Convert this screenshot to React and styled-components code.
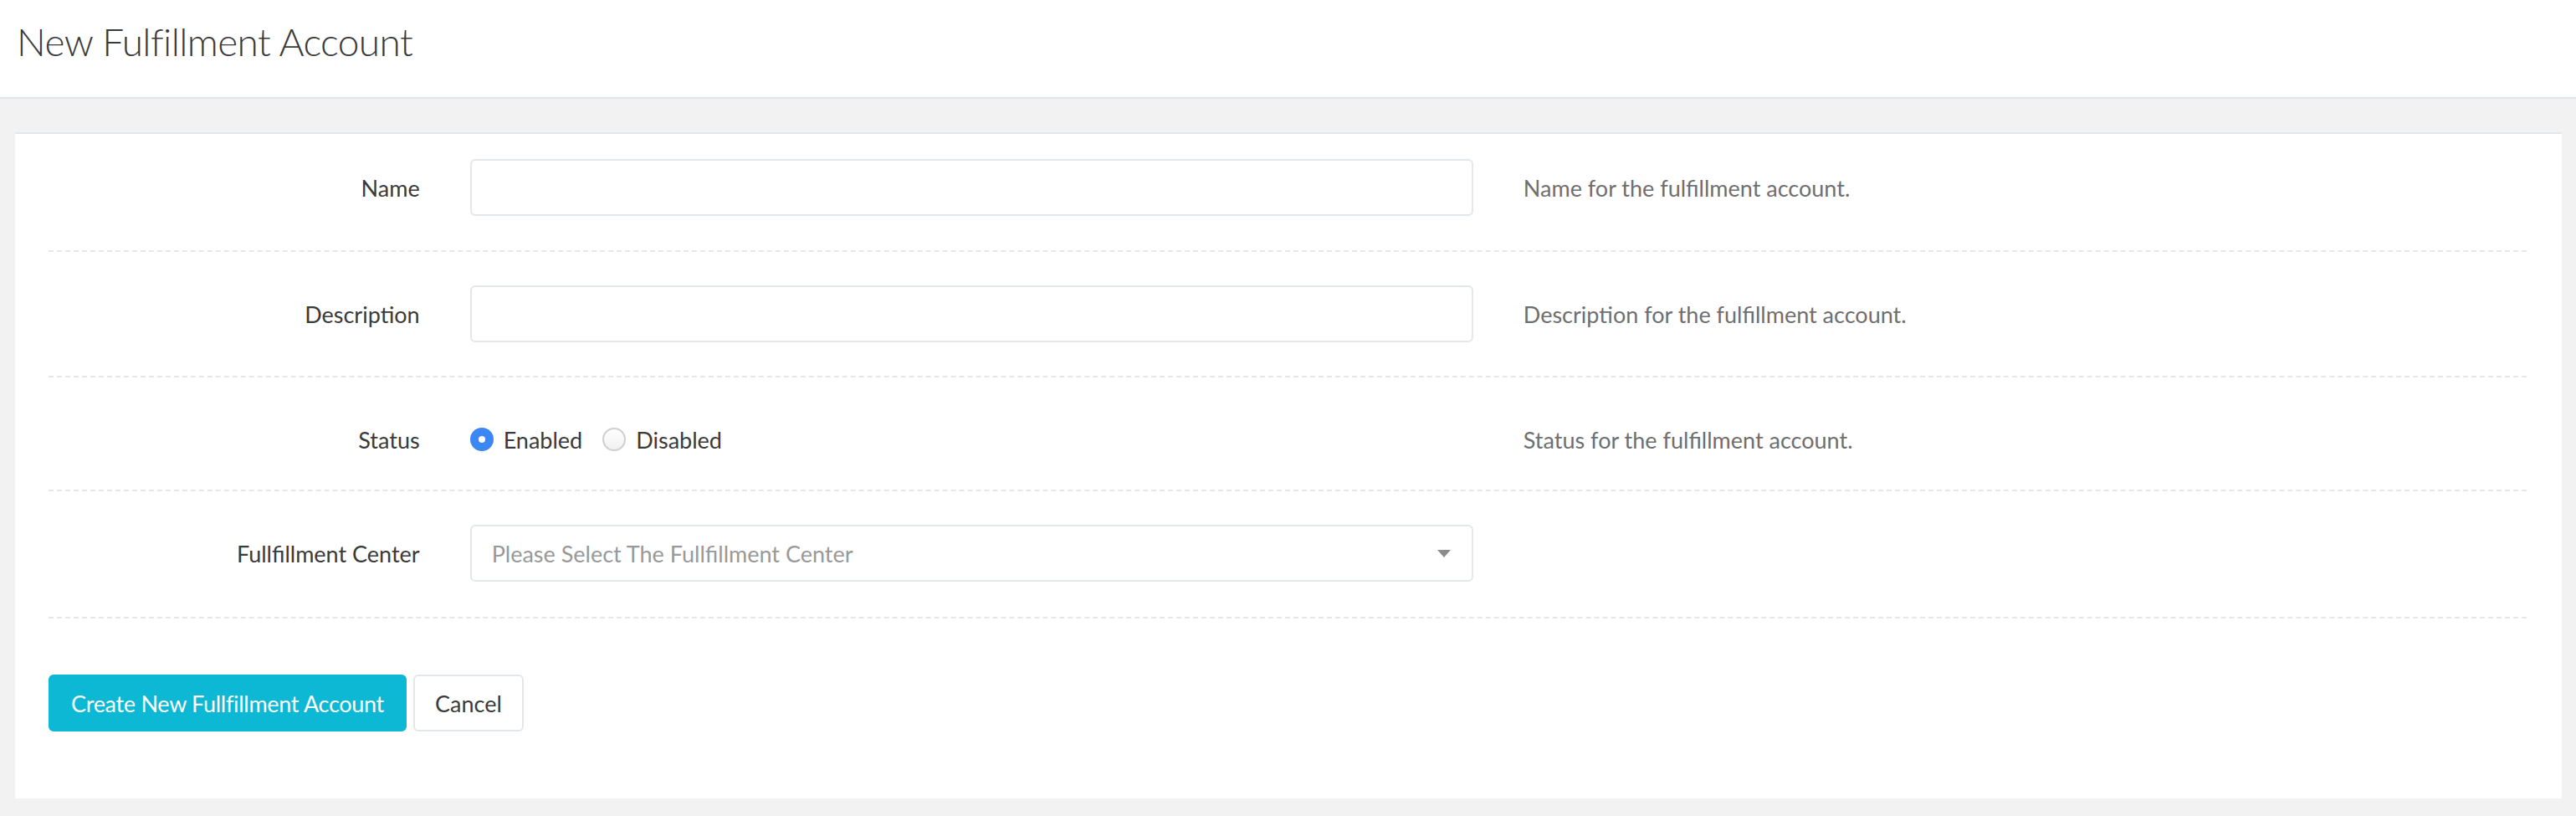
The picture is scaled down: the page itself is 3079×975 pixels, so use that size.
import React from 'react';
import styled, { createGlobalStyle } from 'styled-components';

const GlobalStyle = createGlobalStyle`
    body {
        margin: 0;
        background: #f2f2f2;
        font-family: 'Lato', 'Liberation Sans', sans-serif;
        color: #3a3a3a;
    }
`;

const Header = styled.header`
    background: #ffffff;
    height: 118px;
    border-bottom: 2px solid #e4e7ea;
    padding-left: 20px;
    box-sizing: border-box;
`;

const Title = styled.h1`
    margin: 0;
    padding-top: 27px;
    font-size: 46px;
    line-height: 1;
    font-weight: 300;
    letter-spacing: -0.6px;
    color: #3a3a3a;
`;

const Main = styled.main`
    padding: 40px 17px 19px 18px;
`;

const Card = styled.div`
    background: #ffffff;
    border-top: 2px solid #e4e7ea;
    padding: 0 42px 80px 40px;
`;

const Row = styled.div`
    display: flex;
    align-items: center;
    margin: 0 -30px;
    padding: ${(p) => p.top}px 0 ${(p) => p.bottom}px;
    position: relative;

    &::after {
        content: '';
        position: absolute;
        left: 30px;
        right: 30px;
        bottom: 0;
        border-bottom: 2px dashed #e6e6e6;
    }
`;

const Col = styled.div`
    box-sizing: border-box;
    flex: 0 0 ${(p) => (p.span / 12) * 100}%;
    padding: 0 30px;
    min-height: 68px;
    display: flex;
    align-items: center;
    justify-content: ${(p) => (p.right ? 'flex-end' : 'flex-start')};
`;

const Label = styled.label`
    font-size: 27px;
    color: #3a3a3a;
`;

const Help = styled.span`
    font-size: 27px;
    color: #6f6f6f;
`;

const Input = styled.input`
    box-sizing: border-box;
    width: 100%;
    height: 68px;
    border: 2px solid #e4e7ea;
    border-radius: 6px;
    padding: 0 24px;
    font: inherit;
    font-size: 27px;
    outline: none;
`;

const SelectBox = styled.div`
    box-sizing: border-box;
    width: 100%;
    height: 68px;
    border: 2px solid #e4e7ea;
    border-radius: 6px;
    padding: 0 24px;
    display: flex;
    align-items: center;
    justify-content: space-between;
    font-size: 27px;
    color: #999999;
`;

const Caret = styled.span`
    width: 0;
    height: 0;
    border-left: 8px solid transparent;
    border-right: 8px solid transparent;
    border-top: 9px solid #8c8c8c;
    margin-right: 1px;
`;

const RadioGroup = styled.div`
    display: flex;
    align-items: center;
`;

const RadioOption = styled.label`
    display: flex;
    align-items: center;
    gap: 12px;
    margin-right: 24px;
    font-size: 27px;
    color: #3a3a3a;
`;

const RadioDot = styled.span`
    box-sizing: border-box;
    width: 28px;
    height: 28px;
    border-radius: 50%;
    display: inline-flex;
    align-items: center;
    justify-content: center;
    background: ${(p) => (p.checked ? '#3d87f5' : 'linear-gradient(#ffffff, #f1f1f1)')};
    border: ${(p) => (p.checked ? 'none' : '2px solid #cfcfcf')};

    &::after {
        content: '';
        width: 8px;
        height: 8px;
        border-radius: 50%;
        background: #ffffff;
        display: ${(p) => (p.checked ? 'block' : 'none')};
    }
`;

const Actions = styled.div`
    display: flex;
    gap: 8px;
    margin-top: 67px;
`;

const Button = styled.button`
    height: 68px;
    box-sizing: border-box;
    padding: 0 ${(p) => (p.primary ? 25 : 24)}px;
    border-radius: 6px;
    font-family: inherit;
    font-size: 27px;
    letter-spacing: ${(p) => (p.primary ? '-0.3px' : '0')};
    cursor: pointer;
    background: ${(p) => (p.primary ? '#0cb8d4' : '#ffffff')};
    color: ${(p) => (p.primary ? '#ffffff' : '#3a3a3a')};
    border: 2px solid ${(p) => (p.primary ? '#0cb8d4' : '#e4e7ea')};
`;

const rows = [
    { label: 'Name', help: 'Name for the fulfillment account.', top: 30, bottom: 43 },
    { label: 'Description', help: 'Description for the fulfillment account.', top: 40, bottom: 42 },
];

export default function App() {
    return (
        <>
            <GlobalStyle />
            <Header>
                <Title>New Fulfillment Account</Title>
            </Header>
            <Main>
                <Card>
                    {rows.map((r) => (
                        <Row key={r.label} top={r.top} bottom={r.bottom}>
                            <Col span={2} right>
                                <Label>{r.label}</Label>
                            </Col>
                            <Col span={5}>
                                <Input type="text" />
                            </Col>
                            <Col span={5}>
                                <Help>{r.help}</Help>
                            </Col>
                        </Row>
                    ))}
                    <Row top={40} bottom={28}>
                        <Col span={2} right>
                            <Label>Status</Label>
                        </Col>
                        <Col span={5}>
                            <RadioGroup>
                                <RadioOption>
                                    <RadioDot checked />
                                    Enabled
                                </RadioOption>
                                <RadioOption>
                                    <RadioDot />
                                    Disabled
                                </RadioOption>
                            </RadioGroup>
                        </Col>
                        <Col span={5}>
                            <Help>Status for the fulfillment account.</Help>
                        </Col>
                    </Row>
                    <Row top={40} bottom={44}>
                        <Col span={2} right>
                            <Label>Fullfillment Center</Label>
                        </Col>
                        <Col span={5}>
                            <SelectBox>
                                Please Select The Fullfillment Center
                                <Caret />
                            </SelectBox>
                        </Col>
                        <Col span={5} />
                    </Row>
                    <Actions>
                        <Button primary>Create New Fullfillment Account</Button>
                        <Button>Cancel</Button>
                    </Actions>
                </Card>
            </Main>
        </>
    );
}
